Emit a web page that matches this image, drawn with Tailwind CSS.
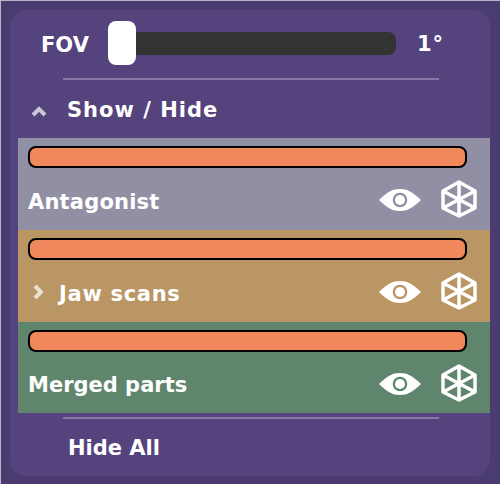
<!DOCTYPE html>
<html lang="en">
<head>
<meta charset="UTF-8">
<title>FOV panel</title>
<script src="https://cdn.jsdelivr.net/npm/@tailwindcss/browser@4"></script>
</head>
<body class="w-[500px] h-[484px] overflow-hidden bg-[#4a3c70] font-['DejaVu_Sans',sans-serif] font-bold text-white">
  <div class="h-full border-t border-l border-[#b9b5c4] pt-[9px] pr-[10px] pb-2 pl-[9px]">
    <div class="h-full rounded-2xl bg-[#54437c] pt-[11px] pl-2 flex flex-col">

      <!-- FOV slider -->
      <div class="h-[44px] flex items-center pl-[23px] text-[21px]">
        <span class="w-[67px] pt-[5px]">FOV</span>
        <div class="relative w-[288px] h-[23px] rounded-lg bg-[#333333]">
          <div class="absolute left-0 -top-[11px] w-[28px] h-[44px] rounded-lg bg-white"></div>
        </div>
        <span class="ml-[21px] pt-[4px] tracking-[1px]">1°</span>
      </div>

      <div class="ml-[45px] mt-[13px] w-[376px] h-0.5 bg-[#8677a6]"></div>

      <!-- Show / Hide -->
      <div class="h-[58px] flex items-center">
        <svg class="ml-[13px] mt-[4px] w-[16px] h-3 opacity-70" viewBox="0 0 16 12" fill="none" stroke="white" stroke-width="4"><path d="M2 10 L8 4 L14 10"/></svg>
        <span class="ml-[20px] pt-[4px] text-[21px] tracking-[1px]">Show / Hide</span>
      </div>

      <!-- rows -->
      <div class="flex flex-col">
        <div class="h-[92px] bg-[#918fa3] pl-[10px] pt-[8px] flex flex-col">
          <div class="w-[439px] h-[23px] rounded-lg border-2 border-black bg-[#f0885c]"></div>
          <div class="flex items-center h-[64px] pr-[12px]">
            <span class="pt-[7px] text-[21px] tracking-[0.2px]">Antagonist</span>
            <svg class="mt-[2px] ml-auto w-[42px] h-[24px]" viewBox="0 0 42 24"><path fill="white" fill-rule="evenodd" d="M0 12 C8 4 14 1 21 1 C28 1 34 4 42 12 C34 20 28 23 21 23 C14 23 8 20 0 12 Z M21 4.700 A7.300 7.300 0 1 0 21 19.300 A7.300 7.300 0 1 0 21 4.700 Z"/><circle cx="21" cy="12" r="5" fill="white"/></svg>
            <svg class="ml-[19px] w-[38px] h-[38px]" viewBox="0 0 38 38" fill="none" stroke="white" stroke-width="3.500" stroke-linejoin="round"><path d="M19 2 L35 11 V28 L19 36 L3 28 V11 Z M19 2 V36 M3 11 L35 28 M35 11 L3 28"/></svg>
          </div>
        </div>
        <div class="h-[92px] bg-[#ba9664] pl-[10px] pt-[8px] flex flex-col">
          <div class="w-[439px] h-[23px] rounded-lg border-2 border-black bg-[#f0885c]"></div>
          <div class="flex items-center h-[64px] pr-[12px]">
            <svg class="ml-[5px] mt-[2px] w-[10px] h-[16px] opacity-70" viewBox="0 0 10 16" fill="none" stroke="white" stroke-width="4"><path d="M2 2 L8 8 L2 14"/></svg>
            <span class="ml-[16px] pt-[7px] text-[21px] tracking-[0.7px]">Jaw scans</span>
            <svg class="mt-[2px] ml-auto w-[42px] h-[24px]" viewBox="0 0 42 24"><path fill="white" fill-rule="evenodd" d="M0 12 C8 4 14 1 21 1 C28 1 34 4 42 12 C34 20 28 23 21 23 C14 23 8 20 0 12 Z M21 4.700 A7.300 7.300 0 1 0 21 19.300 A7.300 7.300 0 1 0 21 4.700 Z"/><circle cx="21" cy="12" r="5" fill="white"/></svg>
            <svg class="ml-[19px] w-[38px] h-[38px]" viewBox="0 0 38 38" fill="none" stroke="white" stroke-width="3.500" stroke-linejoin="round"><path d="M19 2 L35 11 V28 L19 36 L3 28 V11 Z M19 2 V36 M3 11 L35 28 M35 11 L3 28"/></svg>
          </div>
        </div>
        <div class="h-[91px] bg-[#5f866d] pl-[10px] pt-[8px] flex flex-col">
          <div class="w-[439px] h-[23px] rounded-lg border-2 border-black bg-[#f0885c]"></div>
          <div class="flex items-center h-[64px] pr-[12px]">
            <span class="pt-[7px] text-[21px]">Merged parts</span>
            <svg class="mt-[2px] ml-auto w-[42px] h-[24px]" viewBox="0 0 42 24"><path fill="white" fill-rule="evenodd" d="M0 12 C8 4 14 1 21 1 C28 1 34 4 42 12 C34 20 28 23 21 23 C14 23 8 20 0 12 Z M21 4.700 A7.300 7.300 0 1 0 21 19.300 A7.300 7.300 0 1 0 21 4.700 Z"/><circle cx="21" cy="12" r="5" fill="white"/></svg>
            <svg class="ml-[19px] w-[38px] h-[38px]" viewBox="0 0 38 38" fill="none" stroke="white" stroke-width="3.500" stroke-linejoin="round"><path d="M19 2 L35 11 V28 L19 36 L3 28 V11 Z M19 2 V36 M3 11 L35 28 M35 11 L3 28"/></svg>
          </div>
        </div>
      </div>

      <div class="ml-[45px] mt-[4px] w-[376px] h-0.5 bg-[#8677a6]"></div>

      <div class="pl-[50px] pt-[3px] h-[56px] flex items-center text-[21px]">Hide All</div>
    </div>
  </div>
</body>
</html>
